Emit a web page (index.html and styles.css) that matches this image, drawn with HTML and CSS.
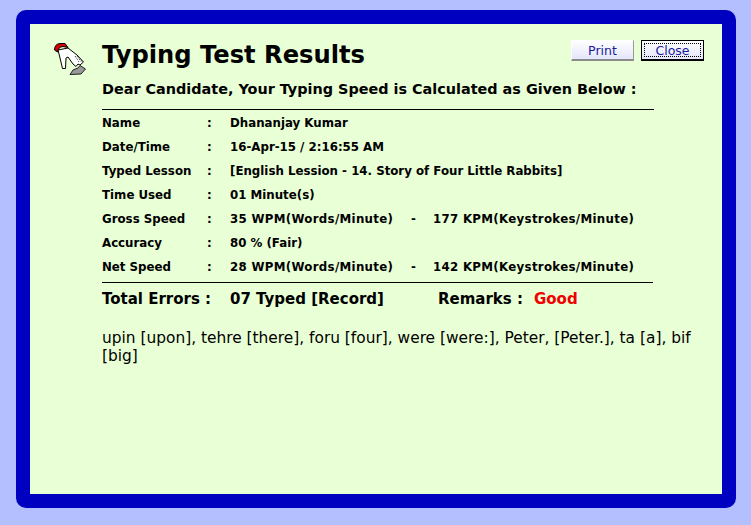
FILE: index.html
```html
<!DOCTYPE html>
<html lang="en">
<head>
  <meta charset="UTF-8" />
  <title>Typing Test Results</title>
  <link rel="stylesheet" href="styles.css">
</head>
<body>
  <div class="panel">
    <div class="side">
      <svg class="hand" width="34" height="35" viewBox="0 0 34 35" aria-hidden="true">
        <path d="M6 9 L16 7 L25 14 L31.5 21 L28 24 L26 23 L24 25.5 L21 23 L16 16 L14 17 L13.5 27.5 L10.5 27.5 L8 17 Z" fill="#fff" stroke="#000" stroke-width="1"/>
        <path d="M2.5 9 Q2.5 3 8 2.5 L13 2.5 L16 6.5 L11 5.5 Q6 6 5.5 11 Z" fill="#d40000" stroke="#000" stroke-width="1"/>
        <path d="M23 15 L27 21 M25 15 L29 20.5 M27 16 L31 21" stroke="#333" stroke-width="1" stroke-dasharray="1 1" fill="none"/>
        <path d="M18 33.5 L21 29 L26 27 L28 24.5 L33.5 28 L29 33 Z" fill="#999" stroke="#222" stroke-width="1"/>
      </svg>
    </div>
    <div class="main">
      <div class="head">
        <h1>Typing Test Results</h1>
        <div class="buttons">
          <button class="btn">Print</button>
          <button class="btn btn-focus"><span>Close</span></button>
        </div>
      </div>
      <h2>Dear Candidate, Your Typing Speed is Calculated as Given Below :</h2>
      <div class="details">
        <div class="row"><b>Name</b><b>:</b><b>Dhananjay Kumar</b></div>
        <div class="row"><b>Date/Time</b><b>:</b><b>16-Apr-15 / 2:16:55 AM</b></div>
        <div class="row"><b>Typed Lesson</b><b>:</b><b>[English Lession - 14. Story of Four Little Rabbits]</b></div>
        <div class="row"><b>Time Used</b><b>:</b><b>01 Minute(s)</b></div>
        <div class="row"><b>Gross Speed</b><b>:</b><b class="speed"><span class="wpm">35 WPM(Words/Minute)</span><span class="dash">-</span><span>177 KPM(Keystrokes/Minute)</span></b></div>
        <div class="row"><b>Accuracy</b><b>:</b><b>80 % (Fair)</b></div>
        <div class="row"><b>Net Speed</b><b>:</b><b class="speed"><span class="wpm">28 WPM(Words/Minute)</span><span class="dash">-</span><span>142 KPM(Keystrokes/Minute)</span></b></div>
      </div>
      <div class="totals">
        <b class="total-label">Total Errors :</b>
        <b class="total-value">07 Typed [Record]</b>
        <b class="remarks">Remarks :</b>
        <b class="good">Good</b>
      </div>
      <p class="errors">upin [upon], tehre [there], foru [four], were [were:], Peter, [Peter.], ta [a], bif [big]</p>
    </div>
  </div>
</body>
</html>
```

FILE: styles.css
```css
html, body {
  height: 100%;
}
body {
  margin: 0;
  padding: 10px 15px 17px 16px;
  box-sizing: border-box;
  background: #b3bfff;
  font-family: "DejaVu Sans", Verdana, sans-serif;
  color: #000;
}
.panel {
  height: 100%;
  box-sizing: border-box;
  display: flex;
  background: #e9ffd6;
  border: 14px solid #0000c0;
  border-radius: 10px;
  background-clip: padding-box;
}
.side {
  width: 72px;
  padding: 17px 0 0 22px;
  box-sizing: border-box;
}
.hand {
  display: block;
}
.main {
  width: 602px;
}
.head {
  display: flex;
  justify-content: space-between;
  padding-top: 16px;
}
h1 {
  margin: 0;
  font-size: 24.2px;
  line-height: 30px;
  font-weight: bold;
}
.buttons {
  display: flex;
  gap: 7px;
}
.btn {
  width: 63px;
  height: 21px;
  padding: 0;
  box-sizing: border-box;
  background: linear-gradient(#ffffff, #e4e6fb);
  border: 1px solid #fff;
  border-right-color: #999;
  border-bottom: 2px solid #8c8c8c;
  font-family: "DejaVu Sans", Verdana, sans-serif;
  font-size: 12.5px;
  color: #1a1a9c;
}
.btn-focus {
  border: 1px solid #000;
  border-bottom-width: 2px;
  padding: 2px;
}
.btn-focus span {
  display: block;
  height: 100%;
  line-height: 13px;
  box-sizing: border-box;
  border: 1px dotted #000;
}
h2 {
  margin: 11px 0 0;
  width: 552px;
  padding-bottom: 11px;
  border-bottom: 1px solid #000;
  font-size: 14.4px;
  line-height: 17px;
  font-weight: bold;
  white-space: nowrap;
}
.details {
  width: 551px;
  padding: 1px 0 3px;
  border-bottom: 1px solid #000;
}
.row {
  display: grid;
  grid-template-columns: 105px 23px 1fr;
  height: 24px;
  align-items: center;
  font-size: 11.8px;
}
.speed {
  display: flex;
  letter-spacing: 0.3px;
}
.wpm {
  width: 181px;
}
.dash {
  width: 22px;
}
.totals {
  display: flex;
  align-items: center;
  height: 32px;
  font-size: 15px;
}
.total-label {
  width: 128px;
}
.total-value {
  width: 208px;
}
.remarks {
  width: 96px;
}
.good {
  color: #f00000;
}
.errors {
  margin: 14px 0 0;
  width: 600px;
  font-size: 15.4px;
  line-height: 18px;
}
```
